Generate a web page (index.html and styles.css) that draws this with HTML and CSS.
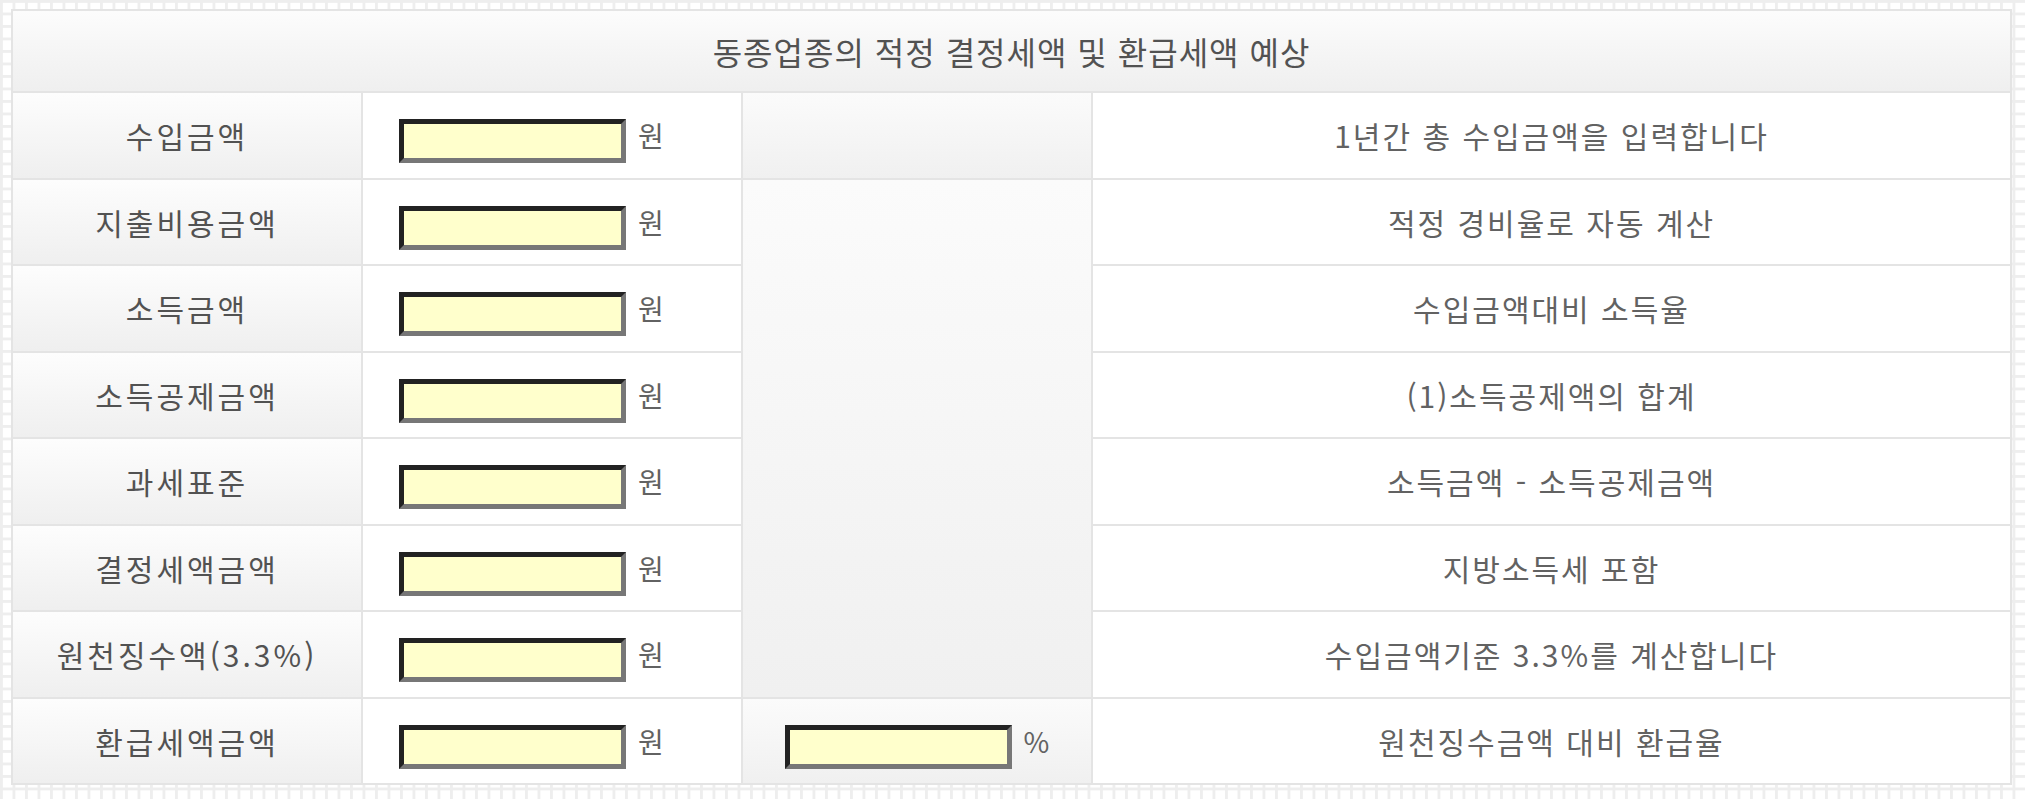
FILE: index.html
```html
<!DOCTYPE html>
<html lang="ko">
<head>
    <meta charset="UTF-8">
    <meta name="viewport" content="width=device-width, initial-scale=1.0">
    <link rel="stylesheet" href="styles.css">
</head>
<body>

<table class="calc">
    <colgroup>
        <col class="c-label">
        <col class="c-input">
        <col class="c-extra">
        <col class="c-desc">
    </colgroup>
    <tr class="head">
        <th colspan="4">동종업종의 적정 결정세액 및 환급세액 예상</th>
    </tr>
    <tr>
        <th class="label">수입금액</th>
        <td class="input"><div class="field"><input type="text"><span>원</span></div></td>
        <td class="extra"></td>
        <td class="desc">1년간 총 수입금액을 입력합니다</td>
    </tr>
    <tr>
        <th class="label">지출비용금액</th>
        <td class="input"><div class="field"><input type="text"><span>원</span></div></td>
        <td class="extra tall" rowspan="6"></td>
        <td class="desc">적정 경비율로 자동 계산</td>
    </tr>
    <tr>
        <th class="label">소득금액</th>
        <td class="input"><div class="field"><input type="text"><span>원</span></div></td>
        <td class="desc">수입금액대비 소득율</td>
    </tr>
    <tr>
        <th class="label">소득공제금액</th>
        <td class="input"><div class="field"><input type="text"><span>원</span></div></td>
        <td class="desc">(1)소득공제액의 합계</td>
    </tr>
    <tr>
        <th class="label">과세표준</th>
        <td class="input"><div class="field"><input type="text"><span>원</span></div></td>
        <td class="desc">소득금액 - 소득공제금액</td>
    </tr>
    <tr>
        <th class="label">결정세액금액</th>
        <td class="input"><div class="field"><input type="text"><span>원</span></div></td>
        <td class="desc">지방소득세 포함</td>
    </tr>
    <tr>
        <th class="label">원천징수액(3.3%)</th>
        <td class="input"><div class="field"><input type="text"><span>원</span></div></td>
        <td class="desc">수입금액기준 3.3%를 계산합니다</td>
    </tr>
    <tr>
        <th class="label">환급세액금액</th>
        <td class="input"><div class="field"><input type="text"><span>원</span></div></td>
        <td class="extra"><div class="field center"><input type="text"><span>%</span></div></td>
        <td class="desc">원천징수금액 대비 환급율</td>
    </tr>
</table>

</body>
</html>
```

FILE: styles.css
```css
body {
    margin: 0;
    padding: 9px 13px 0 11px;
    font-family: "Noto Sans CJK KR", "Noto Sans", sans-serif;
    color: #525252;
    background-color: #fff;
    background-image: linear-gradient(90deg, #eeeeee 3px, transparent 3px), linear-gradient(#eeeeee 3px, transparent 3px);
    background-size: 12.5px 12.5px;
}
.calc {
    width: 100%;
    border-collapse: collapse;
    table-layout: fixed;
    border: 2px solid #e2e2e2;
    background: #fff;
}
.c-label { width: 350px; }
.c-input { width: 380px; }
.c-extra { width: 350px; }
.calc th, .calc td {
    border: 2px solid #e4e4e4;
    padding: 0;
    font-size: 30px;
    font-weight: normal;
    text-align: center;
    vertical-align: middle;
}
.head th {
    height: 80px;
    font-size: 32px;
    letter-spacing: 1px;
    background: linear-gradient(#fcfcfc, #efefef);
}
.label {
    height: 84.5px;
    letter-spacing: 3px;
    background: linear-gradient(#fdfdfd, #efefef);
}
.extra {
    background: linear-gradient(#fbfbfb, #f0f0f0);
}
.desc {
    color: #626262;
    letter-spacing: 2px;
}
.field {
    display: flex;
    align-items: center;
    gap: 12px;
    padding-left: 36px;
    font-size: 28px;
    color: #626262;
}
.field.center {
    justify-content: center;
    padding-left: 0;
}
.field input {
    box-sizing: border-box;
    width: 227px;
    height: 44px;
    margin: 12px 0 0 0;
    border-style: solid;
    border-width: 5px;
    border-color: #222 #777 #777 #222;
    background: #ffffcc;
    outline: none;
}
```
